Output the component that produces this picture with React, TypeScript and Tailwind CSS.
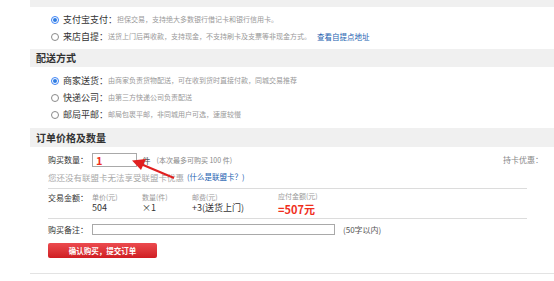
import React from 'react';

const font = { fontFamily: '"Noto Sans CJK SC", "Liberation Sans", sans-serif' };

const Radio = ({ checked }: { checked?: boolean }) =>
  checked ? (
    <span className="inline-flex h-[8px] w-[8px] items-center justify-center rounded-full border border-[#3b82f6] bg-white">
      <span className="h-[4px] w-[4px] rounded-full bg-[#2f7de1]" />
    </span>
  ) : (
    <span className="inline-block h-[8px] w-[8px] rounded-full border border-[#8a8a8a] bg-white" />
  );

interface OptionRow {
  label: string;
  desc: string;
  checked?: boolean;
  link?: string;
}

const payRows: OptionRow[] = [
  { label: '支付宝支付：', desc: '担保交易，支持绝大多数银行借记卡和银行信用卡。', checked: true },
  { label: '来店自提：', desc: '送货上门后再收款，支持现金，不支持刷卡及支票等非现金方式。', link: '查看自提点地址' },
];

const shipRows: OptionRow[] = [
  { label: '商家送货：', desc: '由商家负责货物配送，可在收到货时直接付款，同城交易推荐', checked: true },
  { label: '快递公司：', desc: '由第三方快递公司负责配送' },
  { label: '邮局平邮：', desc: '邮局包裹平邮，非同城用户可选，速度较慢' },
];

const Option = ({ row }: { row: OptionRow }) => (
  <div className="flex h-[17px] items-center whitespace-nowrap pl-[21px]">
    <Radio checked={row.checked} />
    <span className="ml-[4px] text-[9px] text-[#333]">{row.label}</span>
    <span className="text-[7px] text-[#999]">{row.desc}</span>
    {row.link && <span className="ml-[6px] text-[7.5px] text-[#1b62b0]">{row.link}</span>}
  </div>
);

const Label = ({ children }: { children: React.ReactNode }) => (
  <span className="w-[44px] shrink-0 whitespace-nowrap text-[8px] leading-[12px] text-[#333]">{children}</span>
);

const Cell = ({ head, value, w }: { head: string; value: string; w: string }) => (
  <div className={`flex flex-col ${w}`}>
    <span className="text-[7px] leading-[10px] text-[#999]">{head}</span>
    <span className="text-[9px] leading-[12px] text-[#333]">{value}</span>
  </div>
);

const App = () => {
  return (
    <div className="relative h-[281px] w-[554px] overflow-hidden bg-white pl-[30px]" style={font}>
      <div className="h-[7px] bg-[#f0f0f0]" />
      <div className="flex flex-col pt-[4px] pb-[4px]">
        {payRows.map((r) => (
          <Option key={r.label} row={r} />
        ))}
      </div>

      <div className="h-[18px] bg-[#f0f0f0] pl-[6px] text-[10px] font-bold leading-[18px] text-[#333]">配送方式</div>
      <div className="flex flex-col pt-[5px] pb-[5px]">
        {shipRows.map((r) => (
          <Option key={r.label} row={r} />
        ))}
      </div>

      <div className="h-[19px] bg-[#f0f0f0] pl-[6px] text-[10px] font-bold leading-[19px] text-[#333]">订单价格及数量</div>

      <div className="w-[497px] pl-[18px]">
        <div className="flex h-[24px] items-center whitespace-nowrap pt-[2px]">
          <Label>购买数量：</Label>
          <div className="flex h-[14px] w-[45px] items-center border border-[#a9a9a9] pl-[3px] text-[11px] font-bold text-[#f0301e]">
            1
          </div>
          <span className="ml-[5px] text-[8.5px] text-[#555]">件</span>
          <span className="ml-[6px] text-[7px] text-[#888]">(本次最多可购买 100 件)</span>
          <span className="ml-auto mr-[-16px] text-[8px] text-[#888]">持卡优惠：</span>
        </div>
        <div className="flex h-[12px] items-center whitespace-nowrap text-[8.5px] text-[#aaa]">
          您还没有联盟卡无法享受联盟卡优惠
          <span className="ml-[3px] text-[7.5px] text-[#1b62b0]">(什么是联盟卡？)</span>
        </div>
        <div className="mt-[5px] border-t border-[#dcdcdc]" />

        <div className="flex h-[29px] items-start whitespace-nowrap pt-[3px]">
          <Label>交易金额：</Label>
          <Cell head="单价(元)" value="504" w="w-[50px]" />
          <Cell head="数量(件)" value="×1" w="w-[50px]" />
          <Cell head="邮费(元)" value="+3(送货上门)" w="w-[86px]" />
          <div className="flex flex-col">
            <span className="text-[7px] leading-[9px] text-[#999]">应付金额(元)</span>
            <span className="mt-[1px] text-[11px] font-bold leading-[14px] text-[#f0301e]">=507元</span>
          </div>
        </div>
        <div className="border-t border-[#dcdcdc]" />

        <div className="flex h-[21px] items-center whitespace-nowrap">
          <Label>购买备注：</Label>
          <div className="h-[11px] w-[243px] border border-[#a9a9a9]" />
          <span className="ml-[8px] text-[8px] text-[#555]">(50字以内)</span>
        </div>

        <button className="mt-[3px] flex h-[15px] w-[109px] items-center justify-center rounded-[2px] bg-gradient-to-b from-[#ec4a4f] to-[#cf1c22] text-[7.5px] font-bold text-white">
          确认购买，提交订单
        </button>
      </div>

      <div className="absolute left-[30px] right-0 top-[273px] border-t border-[#e3e3e3]" />

      <svg className="absolute left-0 top-0" width="554" height="281" viewBox="0 0 554 281">
        <line x1="174" y1="178" x2="142" y2="164.5" stroke="#e02020" strokeWidth="2" />
        <polygon points="132,160.5 146,159 141,170" fill="#e02020" />
      </svg>
    </div>
  );
};

export default App;
